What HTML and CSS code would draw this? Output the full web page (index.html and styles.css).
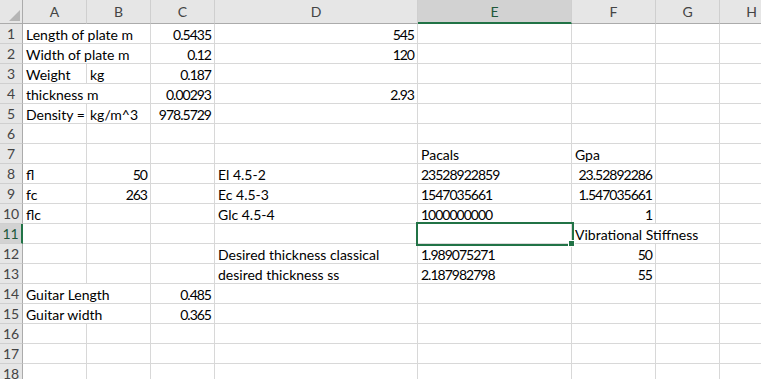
FILE: index.html
```html
<!DOCTYPE html>
<html lang="en">
<head>
  <meta charset="UTF-8">
  <title>Guitar plate</title>
  <link rel="stylesheet" href="styles.css">
</head>
<body>
  <div class="sheet">
    <div class="corner"></div>
    <div class="col">A</div><div class="col">B</div><div class="col">C</div><div class="col">D</div>
    <div class="col on">E</div><div class="col">F</div><div class="col">G</div><div class="col">H</div>

    <div class="rh">1</div><div class="c s2">Length of plate m</div><div class="c n">0.5435</div><div class="c n">545</div><div class="c"></div><div class="c"></div><div class="c"></div><div class="c"></div>
    <div class="rh">2</div><div class="c s2">Width of plate m</div><div class="c n">0.12</div><div class="c n">120</div><div class="c"></div><div class="c"></div><div class="c"></div><div class="c"></div>
    <div class="rh">3</div><div class="c">Weight</div><div class="c">kg</div><div class="c n">0.187</div><div class="c"></div><div class="c"></div><div class="c"></div><div class="c"></div><div class="c"></div>
    <div class="rh">4</div><div class="c s2">thickness m</div><div class="c n">0.00293</div><div class="c n">2.93</div><div class="c"></div><div class="c"></div><div class="c"></div><div class="c"></div>
    <div class="rh">5</div><div class="c">Density =</div><div class="c">kg/m^3</div><div class="c n">978.5729</div><div class="c"></div><div class="c"></div><div class="c"></div><div class="c"></div><div class="c"></div>
    <div class="rh">6</div><div class="c"></div><div class="c"></div><div class="c"></div><div class="c"></div><div class="c"></div><div class="c"></div><div class="c"></div><div class="c"></div>
    <div class="rh">7</div><div class="c"></div><div class="c"></div><div class="c"></div><div class="c"></div><div class="c">Pacals</div><div class="c">Gpa</div><div class="c"></div><div class="c"></div>
    <div class="rh">8</div><div class="c">fl</div><div class="c n">50</div><div class="c"></div><div class="c">El 4.5-2</div><div class="c d">23528922859</div><div class="c n">23.52892286</div><div class="c"></div><div class="c"></div>
    <div class="rh">9</div><div class="c">fc</div><div class="c n">263</div><div class="c"></div><div class="c">Ec 4.5-3</div><div class="c d">1547035661</div><div class="c n">1.547035661</div><div class="c"></div><div class="c"></div>
    <div class="rh">10</div><div class="c">flc</div><div class="c"></div><div class="c"></div><div class="c">Glc 4.5-4</div><div class="c d">1000000000</div><div class="c n">1</div><div class="c"></div><div class="c"></div>
    <div class="rh on">11</div><div class="c"></div><div class="c"></div><div class="c"></div><div class="c"></div><div class="c sel"></div><div class="c s2">Vibrational Stiffness</div><div class="c"></div>
    <div class="rh">12</div><div class="c"></div><div class="c"></div><div class="c"></div><div class="c">Desired thickness classical</div><div class="c d">1.989075271</div><div class="c n">50</div><div class="c"></div><div class="c"></div>
    <div class="rh">13</div><div class="c"></div><div class="c"></div><div class="c"></div><div class="c">desired thickness ss</div><div class="c d">2.187982798</div><div class="c n">55</div><div class="c"></div><div class="c"></div>
    <div class="rh">14</div><div class="c s2">Guitar Length</div><div class="c n">0.485</div><div class="c"></div><div class="c"></div><div class="c"></div><div class="c"></div><div class="c"></div>
    <div class="rh">15</div><div class="c s2">Guitar width</div><div class="c n">0.365</div><div class="c"></div><div class="c"></div><div class="c"></div><div class="c"></div><div class="c"></div>
    <div class="rh">16</div><div class="c"></div><div class="c"></div><div class="c"></div><div class="c"></div><div class="c"></div><div class="c"></div><div class="c"></div><div class="c"></div>
    <div class="rh">17</div><div class="c"></div><div class="c"></div><div class="c"></div><div class="c"></div><div class="c"></div><div class="c"></div><div class="c"></div><div class="c"></div>
    <div class="rh">18</div><div class="c"></div><div class="c"></div><div class="c"></div><div class="c"></div><div class="c"></div><div class="c"></div><div class="c"></div><div class="c"></div>
  </div>
</body>
</html>
```

FILE: styles.css
```css
body {
  margin: 0;
  background: #fff;
  overflow: hidden;
  font-family: Lato, "Liberation Sans", sans-serif;
  font-size: 14px;
  color: #000;
}
.sheet {
  display: grid;
  grid-template-columns: 23px 64px 64px 64px 203px 154px 84px 64px 64px;
  grid-template-rows: 24px repeat(18, 20px);
  width: 784px;
}
.sheet > div {
  box-sizing: border-box;
  white-space: nowrap;
}
.corner {
  background: #e6e6e6;
  border-right: 1px solid #ababab;
  border-bottom: 1px solid #ababab;
  position: relative;
}
.corner::after {
  content: "";
  position: absolute;
  right: 2px;
  bottom: 2px;
  width: 0;
  height: 0;
  border-left: 11px solid transparent;
  border-bottom: 11px solid #b5b5b5;
}
.col {
  background: #e6e6e6;
  color: #444;
  text-align: center;
  line-height: 23px;
  border-right: 1px solid #cfcfcf;
  border-bottom: 1px solid #ababab;
}
.col.on {
  background: #d2d2d2;
  color: #21583a;
  border-bottom: 2px solid #217346;
}
.rh {
  background: #e6e6e6;
  color: #444;
  text-align: center;
  line-height: 19px;
  border-right: 1px solid #ababab;
  border-bottom: 1px solid #cfcfcf;
}
.rh.on {
  background: #d2d2d2;
  color: #21583a;
  border-right: 2px solid #217346;
}
.c {
  border-right: 1px solid #d8d8d8;
  border-bottom: 1px solid #d8d8d8;
  padding: 0 3px;
  line-height: 19px;
  padding-top: 1px;
}
.s2 { grid-column: span 2; }
.n {
  text-align: right;
  letter-spacing: -1px;
}
.d { letter-spacing: -1px; }
.sel {
  position: relative;
  z-index: 1;
  outline: 2px solid #217346;
}
.sel::after {
  content: "";
  position: absolute;
  right: -4px;
  bottom: -4px;
  width: 5px;
  height: 5px;
  background: #217346;
  border: 1px solid #fff;
}
```
